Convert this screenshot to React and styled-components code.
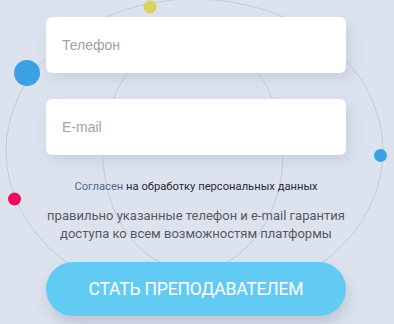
import React from "react";
import styled, { createGlobalStyle } from "styled-components";

const Global = createGlobalStyle`
  html, body { margin: 0; padding: 0; }
  body { background: #dde3ee; font-family: Roboto, "Noto Sans", sans-serif; }
  * { box-sizing: border-box; }
`;

const Page = styled.div`
  position: relative;
  width: 394px;
  height: 324px;
  overflow: hidden;
  background: #dde3ee;
`;

const Orbits = styled.svg`
  position: absolute;
  left: 0;
  top: 0;
  width: 394px;
  height: 324px;
  pointer-events: none;
`;

const Form = styled.form`
  position: relative;
  width: 300px;
  margin-left: 46px;
  padding-top: 17px;
  display: flex;
  flex-direction: column;
`;

const Field = styled.input`
  width: 300px;
  height: 56px;
  border: none;
  border-radius: 6px;
  background: #ffffff;
  padding: 0 16px;
  font-family: "Liberation Sans", Arial, sans-serif;
  font-size: 14px;
  color: #333;
  outline: none;
  box-shadow: 4px 6px 14px rgba(160, 172, 196, 0.35);
  margin-bottom: ${(p) => p.$gap || 0}px;
  &::placeholder { color: #a3a3a3; }
`;

const Consent = styled.p`
  margin: 25px 0 0;
  text-align: center;
  font-size: 11.2px;
  line-height: 14px;
  color: #262b33;
`;

const ConsentLink = styled.span`
  color: #4e6a8e;
`;

const Note = styled.p`
  margin: 13px 0 0;
  text-align: center;
  font-size: 13px;
  line-height: 18px;
  color: #555a60;
`;

const Submit = styled.button`
  margin-top: 19px;
  width: 300px;
  height: 54px;
  border: none;
  border-radius: 27px;
  background: #62cbf4;
  color: #ffffff;
  font-family: Roboto, sans-serif;
  font-size: 17.5px;
  letter-spacing: -0.2px;
  text-transform: uppercase;
  box-shadow: 2px 8px 14px rgba(150, 162, 186, 0.45);
  cursor: pointer;
`;

export default function App() {
  return (
    <Page>
      <Global />
      <Orbits viewBox="0 0 394 324">
        <ellipse cx="194.5" cy="151" rx="188.5" ry="152" fill="none" stroke="#c6cbd5" strokeWidth="1" />
        <ellipse cx="193" cy="153.5" rx="90" ry="117" fill="none" stroke="#c6cbd5" strokeWidth="1" />
        <circle cx="150" cy="7" r="6.5" fill="#d9d45c" />
        <circle cx="27" cy="73" r="13" fill="#3aa2e2" />
        <circle cx="380.5" cy="155.5" r="6.5" fill="#3aa2e2" />
        <circle cx="14.5" cy="199" r="6.5" fill="#f2075f" />
      </Orbits>
      <Form onSubmit={(e) => e.preventDefault()}>
        <Field type="tel" placeholder="Телефон" $gap={26} />
        <Field type="email" placeholder="E-mail" />
        <Consent>
          <ConsentLink>Согласен</ConsentLink> на обработку персональных данных
        </Consent>
        <Note>
          правильно указанные телефон и e-mail гарантия
          <br />
          доступа ко всем возможностям платформы
        </Note>
        <Submit type="submit">Стать преподавателем</Submit>
      </Form>
    </Page>
  );
}
